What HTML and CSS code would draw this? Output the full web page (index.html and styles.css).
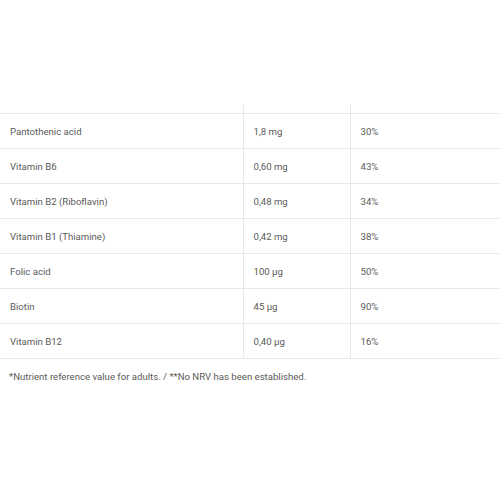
FILE: index.html
```html
<!DOCTYPE html>
<html>
<head>
<meta charset="utf-8">
<link rel="stylesheet" href="styles.css">
</head>
<body>
<div class="wrap">
  <table class="nutri">
    <colgroup>
      <col class="c1"><col class="c2"><col class="c3">
    </colgroup>
    <tr class="head"><td></td><td></td><td></td></tr>
    <tr><td>Pantothenic acid</td><td>1,8 mg</td><td>30%</td></tr>
    <tr><td>Vitamin B6</td><td>0,60 mg</td><td>43%</td></tr>
    <tr><td>Vitamin B2 (Riboflavin)</td><td>0,48 mg</td><td>34%</td></tr>
    <tr><td>Vitamin B1 (Thiamine)</td><td>0,42 mg</td><td>38%</td></tr>
    <tr><td>Folic acid</td><td>100 µg</td><td>50%</td></tr>
    <tr><td>Biotin</td><td>45 µg</td><td>90%</td></tr>
    <tr><td>Vitamin B12</td><td>0,40 µg</td><td>16%</td></tr>
  </table>
  <p class="note">*Nutrient reference value for adults. / **No NRV has been established.</p>
</div>
</body>
</html>
```
FILE: styles.css
```css
html, body {
  margin: 0;
  padding: 0;
  background: #fff;
}
body {
  font-family: Roboto, "Liberation Sans", sans-serif;
  font-size: 9.6px;
  color: #5a5a5a;
}
.wrap {
  padding-top: 105px;
}
.nutri {
  width: 500px;
  border-collapse: collapse;
  table-layout: fixed;
}
.c1 { width: 243px; }
.c2 { width: 107px; }
.nutri td {
  height: 34px;
  padding: 0 10px;
  border-top: 1px solid #e9e9e9;
  border-bottom: 1px solid #e9e9e9;
  vertical-align: middle;
}
.nutri td + td {
  border-left: 1px solid #e9e9e9;
}
.nutri .head td {
  height: 8px;
  padding: 0;
  border-top: none;
}
.note {
  margin: 11px 0 0;
  padding: 0 9px;
  line-height: 14px;
}
```
